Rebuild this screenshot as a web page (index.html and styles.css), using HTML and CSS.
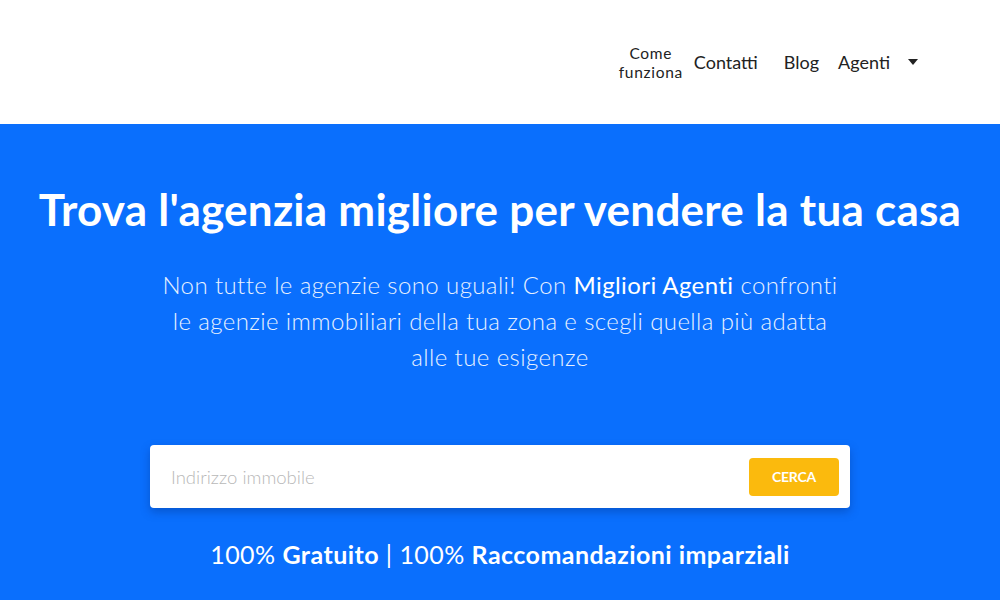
FILE: index.html
```html
<!DOCTYPE html>
<html lang="it">
<head>
<meta charset="utf-8">
<link rel="stylesheet" href="styles.css">
</head>
<body>
<header class="header">
  <nav class="nav">
    <a class="nav-link nav-two">Come<br>funziona</a>
    <a class="nav-link">Contatti</a>
    <a class="nav-link nav-blog">Blog</a>
    <a class="nav-link nav-drop">Agenti <span class="caret"></span></a>
  </nav>
</header>
<section class="hero">
  <h1 class="title">Trova l'agenzia migliore per vendere la tua casa</h1>
  <p class="lead">Non tutte le agenzie sono uguali! Con <strong>Migliori Agenti</strong> confronti<br>le agenzie immobiliari della tua zona e scegli quella più adatta<br>alle tue esigenze</p>
  <form class="search">
    <input class="search-input" type="text" placeholder="Indirizzo immobile">
    <button class="search-btn" type="button">CERCA</button>
  </form>
  <p class="claims">100% <strong>Gratuito</strong> | 100% <strong>Raccomandazioni imparziali</strong></p>
</section>
</body>
</html>
```
FILE: styles.css
```css
* { box-sizing: border-box; }
html, body { margin: 0; padding: 0; }
body {
  width: 1000px;
  height: 600px;
  overflow: hidden;
  font-family: "Lato", "Liberation Sans", sans-serif;
  background: #0a6ffd;
}
.header {
  height: 124px;
  background: #fff;
  display: flex;
  justify-content: flex-end;
  align-items: flex-start;
}
.nav {
  display: flex;
  align-items: center;
  height: 62px;
  margin-top: 31px;
  margin-right: 82px;
}
.nav-link {
  color: #222;
  font-size: 18px;
  line-height: 18px;
  text-decoration: none;
}
.nav-two {
  text-align: center;
  width: 70px;
  margin-right: 8px;
  margin-top: 1px;
  font-size: 15.5px;
  line-height: 19px;
  letter-spacing: 0.7px;
}
.nav-blog { margin-left: 26px; }
.nav-drop { margin-left: 19px; display: flex; align-items: center; }
.caret {
  display: inline-block;
  width: 0; height: 0;
  border-left: 5px solid transparent;
  border-right: 5px solid transparent;
  border-top: 6px solid #222;
  margin-left: 18px;
}
.hero {
  display: flex;
  flex-direction: column;
  align-items: center;
  color: #fff;
  text-align: center;
}
.title {
  margin: 57px 0 0;
  font-size: 44px;
  line-height: 56px;
  font-weight: 700;
  letter-spacing: 0.25px;
}
.lead {
  margin: 30px 0 0;
  font-size: 24px;
  line-height: 36px;
  font-weight: 300;
  letter-spacing: 0.4px;
  color: #e8f1ff;
}
.lead strong { font-weight: 400; color: #fff; }
.search {
  margin-top: 70px;
  width: 700px;
  height: 63px;
  background: #fff;
  border-radius: 4px;
  box-shadow: 0 4px 10px rgba(0, 40, 120, 0.35);
  display: flex;
  align-items: center;
  padding: 0 11px 0 21px;
}
.search-input {
  flex: 1;
  border: 0;
  outline: none;
  font-family: "Lato", sans-serif;
  font-size: 18.5px;
  color: #333;
  background: transparent;
  padding: 0;
}
.search-input::placeholder { color: #b8b8b8; font-weight: 300; }
.search-btn {
  width: 90px;
  height: 38px;
  border: 0;
  border-radius: 4px;
  background: #fbba0d;
  color: #fff;
  font-family: "Lato", sans-serif;
  font-weight: 700;
  font-size: 14px;
  letter-spacing: -0.2px;
}
.claims {
  margin: 31px 0 0;
  font-size: 25px;
  line-height: 30px;
  font-weight: 400;
  letter-spacing: 0.45px;
}
.claims strong { font-weight: 700; }
```
